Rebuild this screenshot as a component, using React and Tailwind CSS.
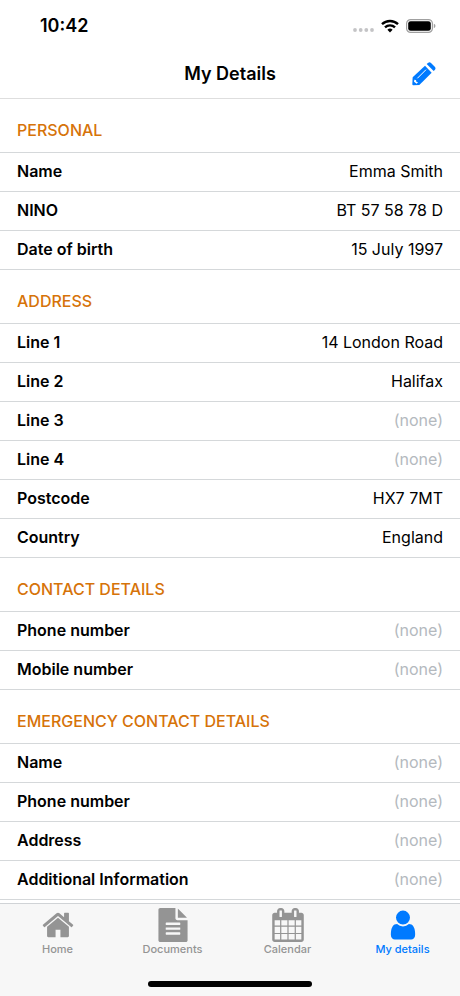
const sections = [
  {
    title: "PERSONAL",
    rows: [
      ["Name", "Emma Smith"],
      ["NINO", "BT 57 58 78 D"],
      ["Date of birth", "15 July 1997"],
    ],
  },
  {
    title: "ADDRESS",
    rows: [
      ["Line 1", "14 London Road"],
      ["Line 2", "Halifax"],
      ["Line 3", null],
      ["Line 4", null],
      ["Postcode", "HX7 7MT"],
      ["Country", "England"],
    ],
  },
  {
    title: "CONTACT DETAILS",
    rows: [
      ["Phone number", null],
      ["Mobile number", null],
    ],
  },
  {
    title: "EMERGENCY CONTACT DETAILS",
    rows: [
      ["Name", null],
      ["Phone number", null],
      ["Address", null],
      ["Additional Information", null],
    ],
  },
];

const icons = {
  home: "M1472 992v480q0 26-19 45t-45 19h-384v-384h-256v384h-384q-26 0-45-19t-19-45v-480q0-1 .5-3t.5-3l575-474 575 474q1 2 1 6zm223-69l-62 74q-8 9-21 11h-3q-13 0-21-7l-692-577-692 577q-12 8-24 7-13-2-21-11l-62-74q-8-10-7-23.5t11-21.5l719-599q32-26 76-26t76 26l244 204v-195q0-14 9-23t23-9h192q14 0 23 9t9 23v408l219 182q10 8 11 21.5t-7 23.5z",
  document:
    "M1596 476q14 14 28 36h-472v-472q22 14 36 28zm-476 164h544v1056q0 40-28 68t-68 28h-1344q-40 0-68-28t-28-68v-1600q0-40 28-68t68-28h800v544q0 40 28 68t68 28zm160 736v-64q0-14-9-23t-23-9h-704q-14 0-23 9t-9 23v64q0 14 9 23t23 9h704q14 0 23-9t9-23zm0-256v-64q0-14-9-23t-23-9h-704q-14 0-23 9t-9 23v64q0 14 9 23t23 9h704q14 0 23-9t9-23zm0-256v-64q0-14-9-23t-23-9h-704q-14 0-23 9t-9 23v64q0 14 9 23t23 9h704q14 0 23-9t9-23z",
  calendar:
    "M192 1664h288v-288h-288v288zm352 0h320v-288h-320v288zm-352-352h288v-320h-288v320zm352 0h320v-320h-320v320zm-352-384h288v-288h-288v288zm736 736h320v-288h-320v288zm-384-736h320v-288h-320v288zm768 736h288v-288h-288v288zm-384-352h320v-320h-320v320zm-352-864v-288q0-13-9.500-22.500t-22.500-9.500h-64q-13 0-22.500 9.500t-9.500 22.500v288q0 13 9.500 22.500t22.500 9.500h64q13 0 22.500-9.500t9.500-22.500zm736 864h288v-320h-288v320zm-384-384h320v-288h-320v288zm384 0h288v-288h-288v288zm32-480v-288q0-13-9.500-22.500t-22.500-9.500h-64q-13 0-22.500 9.500t-9.500 22.500v288q0 13 9.500 22.500t22.500 9.500h64q13 0 22.500-9.500t9.500-22.500zm384-64v1280q0 52-38 90t-90 38h-1408q-52 0-90-38t-38-90v-1280q0-52 38-90t90-38h128v-96q0-66 47-113t113-47h64q66 0 113 47t47 113v96h384v-96q0-66 47-113t113-47h64q66 0 113 47t47 113v96h128q52 0 90 38t38 90z",
  user: "M1536 1409q0 109-62.5 182t-150.500 73h-854q-88 0-150.500-73t-62.500-182q0-85 8.500-165.500t31.500-157 58.500-131 94-84 134.500-29.500q131 128 313 128t313-128q76 0 134.500 29.500t94 84 58.500 131 31.500 157 8.500 165.500zm-271-904q0 153-108 261t-261 108-261-108-108-261 108-261 261-108 261 108 108 261z",
};

const tabs = [
  { label: "Home", icon: "home" },
  { label: "Documents", icon: "document" },
  { label: "Calendar", icon: "calendar" },
  { label: "My details", icon: "user", active: true },
];

export default function App() {
  return (
    <div className="flex min-h-screen flex-col bg-white font-['Inter',sans-serif] text-black">
      <StatusBar />

      <header className="grid h-12 grid-cols-[1fr_auto_1fr] items-center border-b border-[#dedede] px-6 pb-0.5">
        <h1 className="col-start-2 text-lg font-semibold">My Details</h1>
        <button type="button" aria-label="Edit details" className="justify-self-end text-[#007aff]">
          <PencilIcon />
        </button>
      </header>

      <main className="flex-1">
        {sections.map((section) => (
          <DetailSection key={section.title} {...section} />
        ))}
      </main>

      <TabBar />
    </div>
  );
}

function StatusBar() {
  return (
    <div className="flex h-[51px] items-center justify-between pr-6 pl-10">
      <span className="text-lg font-semibold">10:42</span>
      <div className="flex items-center gap-[7px]">
        <svg viewBox="0 0 21 4" className="mt-2 h-1 w-[21px]" fill="#c4c4c6">
          <circle cx="2" cy="2" r="1.900" />
          <circle cx="7.700" cy="2" r="1.900" />
          <circle cx="13.300" cy="2" r="1.900" />
          <circle cx="19" cy="2" r="1.900" />
        </svg>
        <svg viewBox="0 0 18 14" className="h-3.5 w-[18px]" fill="none" stroke="black" strokeWidth="2.400">
          <path d="M1 5.200a11.500 11.500 0 0 1 16 0" />
          <path d="M4 8.400a7.200 7.200 0 0 1 10 0" />
          <path d="M9 13.500l-2.600-2.700a3.800 3.800 0 0 1 5.200 0z" fill="black" stroke="none" />
        </svg>
        <svg viewBox="0 0 30 14" className="h-3.5 w-[30px]">
          <rect x="0.600" y="0.600" width="25.800" height="12.800" rx="4" fill="none" stroke="#a0a0a0" strokeWidth="1.200" />
          <rect x="2.200" y="2.200" width="22.600" height="9.600" rx="2.400" fill="black" />
          <path d="M27.800 4.800q1.700.6 1.700 2.200t-1.700 2.200z" fill="#a0a0a0" />
        </svg>
      </div>
    </div>
  );
}

function DetailSection({ title, rows }) {
  return (
    <section>
      <h2 className="flex h-[54px] items-center border-b border-[#d5d8da] px-[17px] pt-2 text-base font-medium text-[#d67309]">
        {title}
      </h2>
      <dl>
        {rows.map(([label, value]) => (
          <div
            key={label}
            className="flex h-[39px] items-center justify-between border-b border-[#d5d8da] px-[17px] pb-0.5 text-base"
          >
            <dt className="font-semibold">{label}</dt>
            <dd className={value ? "" : "text-[#b4b9be]"}>{value ?? "(none)"}</dd>
          </div>
        ))}
      </dl>
    </section>
  );
}

function TabBar() {
  return (
    <nav className="sticky bottom-0 border-t border-[#d0d3d6] bg-[#f7f7f7]">
      <ul className="flex">
        {tabs.map((tab) => (
          <li key={tab.label} className="flex-1">
            <a
              href="#"
              aria-current={tab.active ? "page" : undefined}
              className={
                tab.active
                  ? "flex flex-col items-center pt-1 text-[#007aff]"
                  : "flex flex-col items-center pt-1 text-[#949494]"
              }
            >
              <Icon name={tab.icon} className="size-[34px]" />
              <span className="text-[11px] leading-[14px] font-medium">{tab.label}</span>
            </a>
          </li>
        ))}
      </ul>
      <div className="mx-auto mt-[25px] mb-[9px] h-1.5 w-[164px] rounded-full bg-black" />
    </nav>
  );
}

function Icon({ name, className }) {
  return (
    <svg viewBox="0 0 1792 1792" fill="currentColor" aria-hidden="true" className={className}>
      <path d={icons[name]} />
    </svg>
  );
}

function PencilIcon() {
  return (
    <svg viewBox="0 0 72 72" fill="currentColor" aria-hidden="true" className="size-6">
      <path d="M2 46L39 11L59 32L22 69L4 70Q1 70 1 67Z" />
      <path d="M44 6L49 2Q53-1 57 3L69 15Q72 19 69 23L65 27Z" />
      <path d="M16 49L42 23" stroke="white" strokeWidth="3" />
      <path d="M7 53L12 54L13 59L18 61L14 65L6 59Z" fill="white" />
    </svg>
  );
}
